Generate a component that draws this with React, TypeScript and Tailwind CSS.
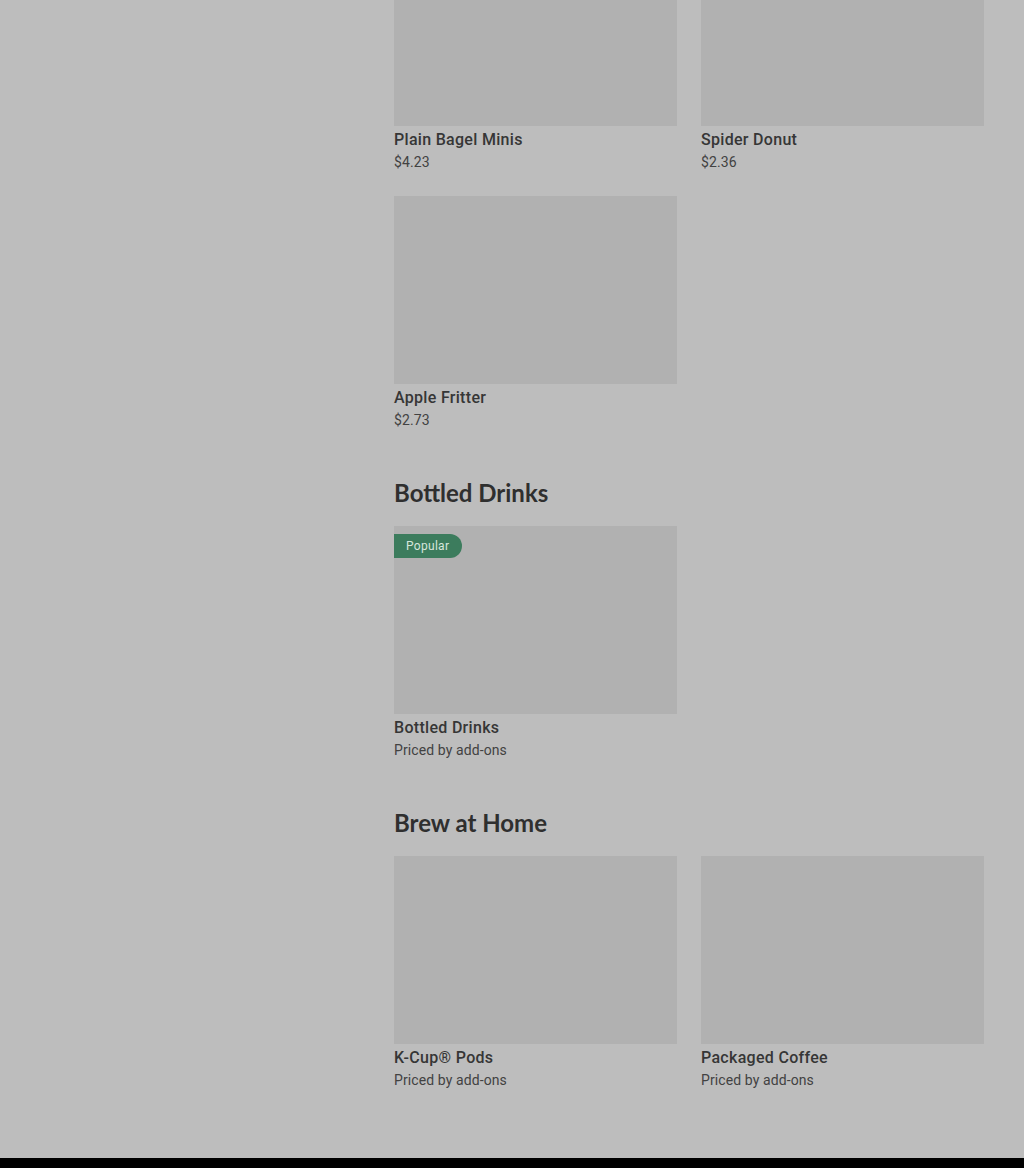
import React from "react";

type Item = { name: string; price: string; badge?: string };

const Card = ({ item }: { item: Item }) => (
  <div className="flex flex-col">
    <div className="relative h-[188px] w-full bg-[#b1b1b1]">
      {item.badge && (
        <span className="absolute left-0 top-[8px] flex h-[24px] items-center rounded-r-full bg-[#3c7c5d] pl-[12px] pr-[13px] text-[12px] tracking-[0.3px] text-[#d6e6dc]">
          {item.badge}
        </span>
      )}
    </div>
    <div className="pt-[3px] text-[16px] font-medium leading-[22px] tracking-[0.3px] text-[#363636]">{item.name}</div>
    <div className="mt-[1px] text-[14px] leading-[20px] tracking-[0.1px] text-[#424242]">{item.price}</div>
  </div>
);

const Section = ({ title, items }: { title: string; items: Item[] }) => (
  <div className="mt-[47px] flex flex-col">
    <h2 className="mb-[17px] text-[24px] font-bold leading-[32px] text-[#2f2f2f]" style={{ fontFamily: "Lato, 'Open Sans', sans-serif" }}>
      {title}
    </h2>
    <div className="grid grid-cols-2 gap-x-[24px] gap-y-[24px]">
      {items.map((it) => (
        <Card key={it.name} item={it} />
      ))}
    </div>
  </div>
);

export default function App() {
  return (
    <div className="flex min-h-[1168px] w-[1024px] flex-col bg-[#bdbdbd]" style={{ fontFamily: "Roboto, 'Liberation Sans', sans-serif" }}>
      <div className="flex h-[1158px] flex-col overflow-hidden">
        <div className="mt-[-62px] ml-[394px] w-[590px]">
          <div className="grid grid-cols-2 gap-x-[24px] gap-y-[24px]">
            <Card item={{ name: "Plain Bagel Minis", price: "$4.23" }} />
            <Card item={{ name: "Spider Donut", price: "$2.36" }} />
            <Card item={{ name: "Apple Fritter", price: "$2.73" }} />
          </div>
          <Section title="Bottled Drinks" items={[{ name: "Bottled Drinks", price: "Priced by add-ons", badge: "Popular" }]} />
          <Section
            title="Brew at Home"
            items={[
              { name: "K-Cup® Pods", price: "Priced by add-ons" },
              { name: "Packaged Coffee", price: "Priced by add-ons" },
            ]}
          />
        </div>
      </div>
      <div className="h-[10px] bg-black" />
    </div>
  );
}
